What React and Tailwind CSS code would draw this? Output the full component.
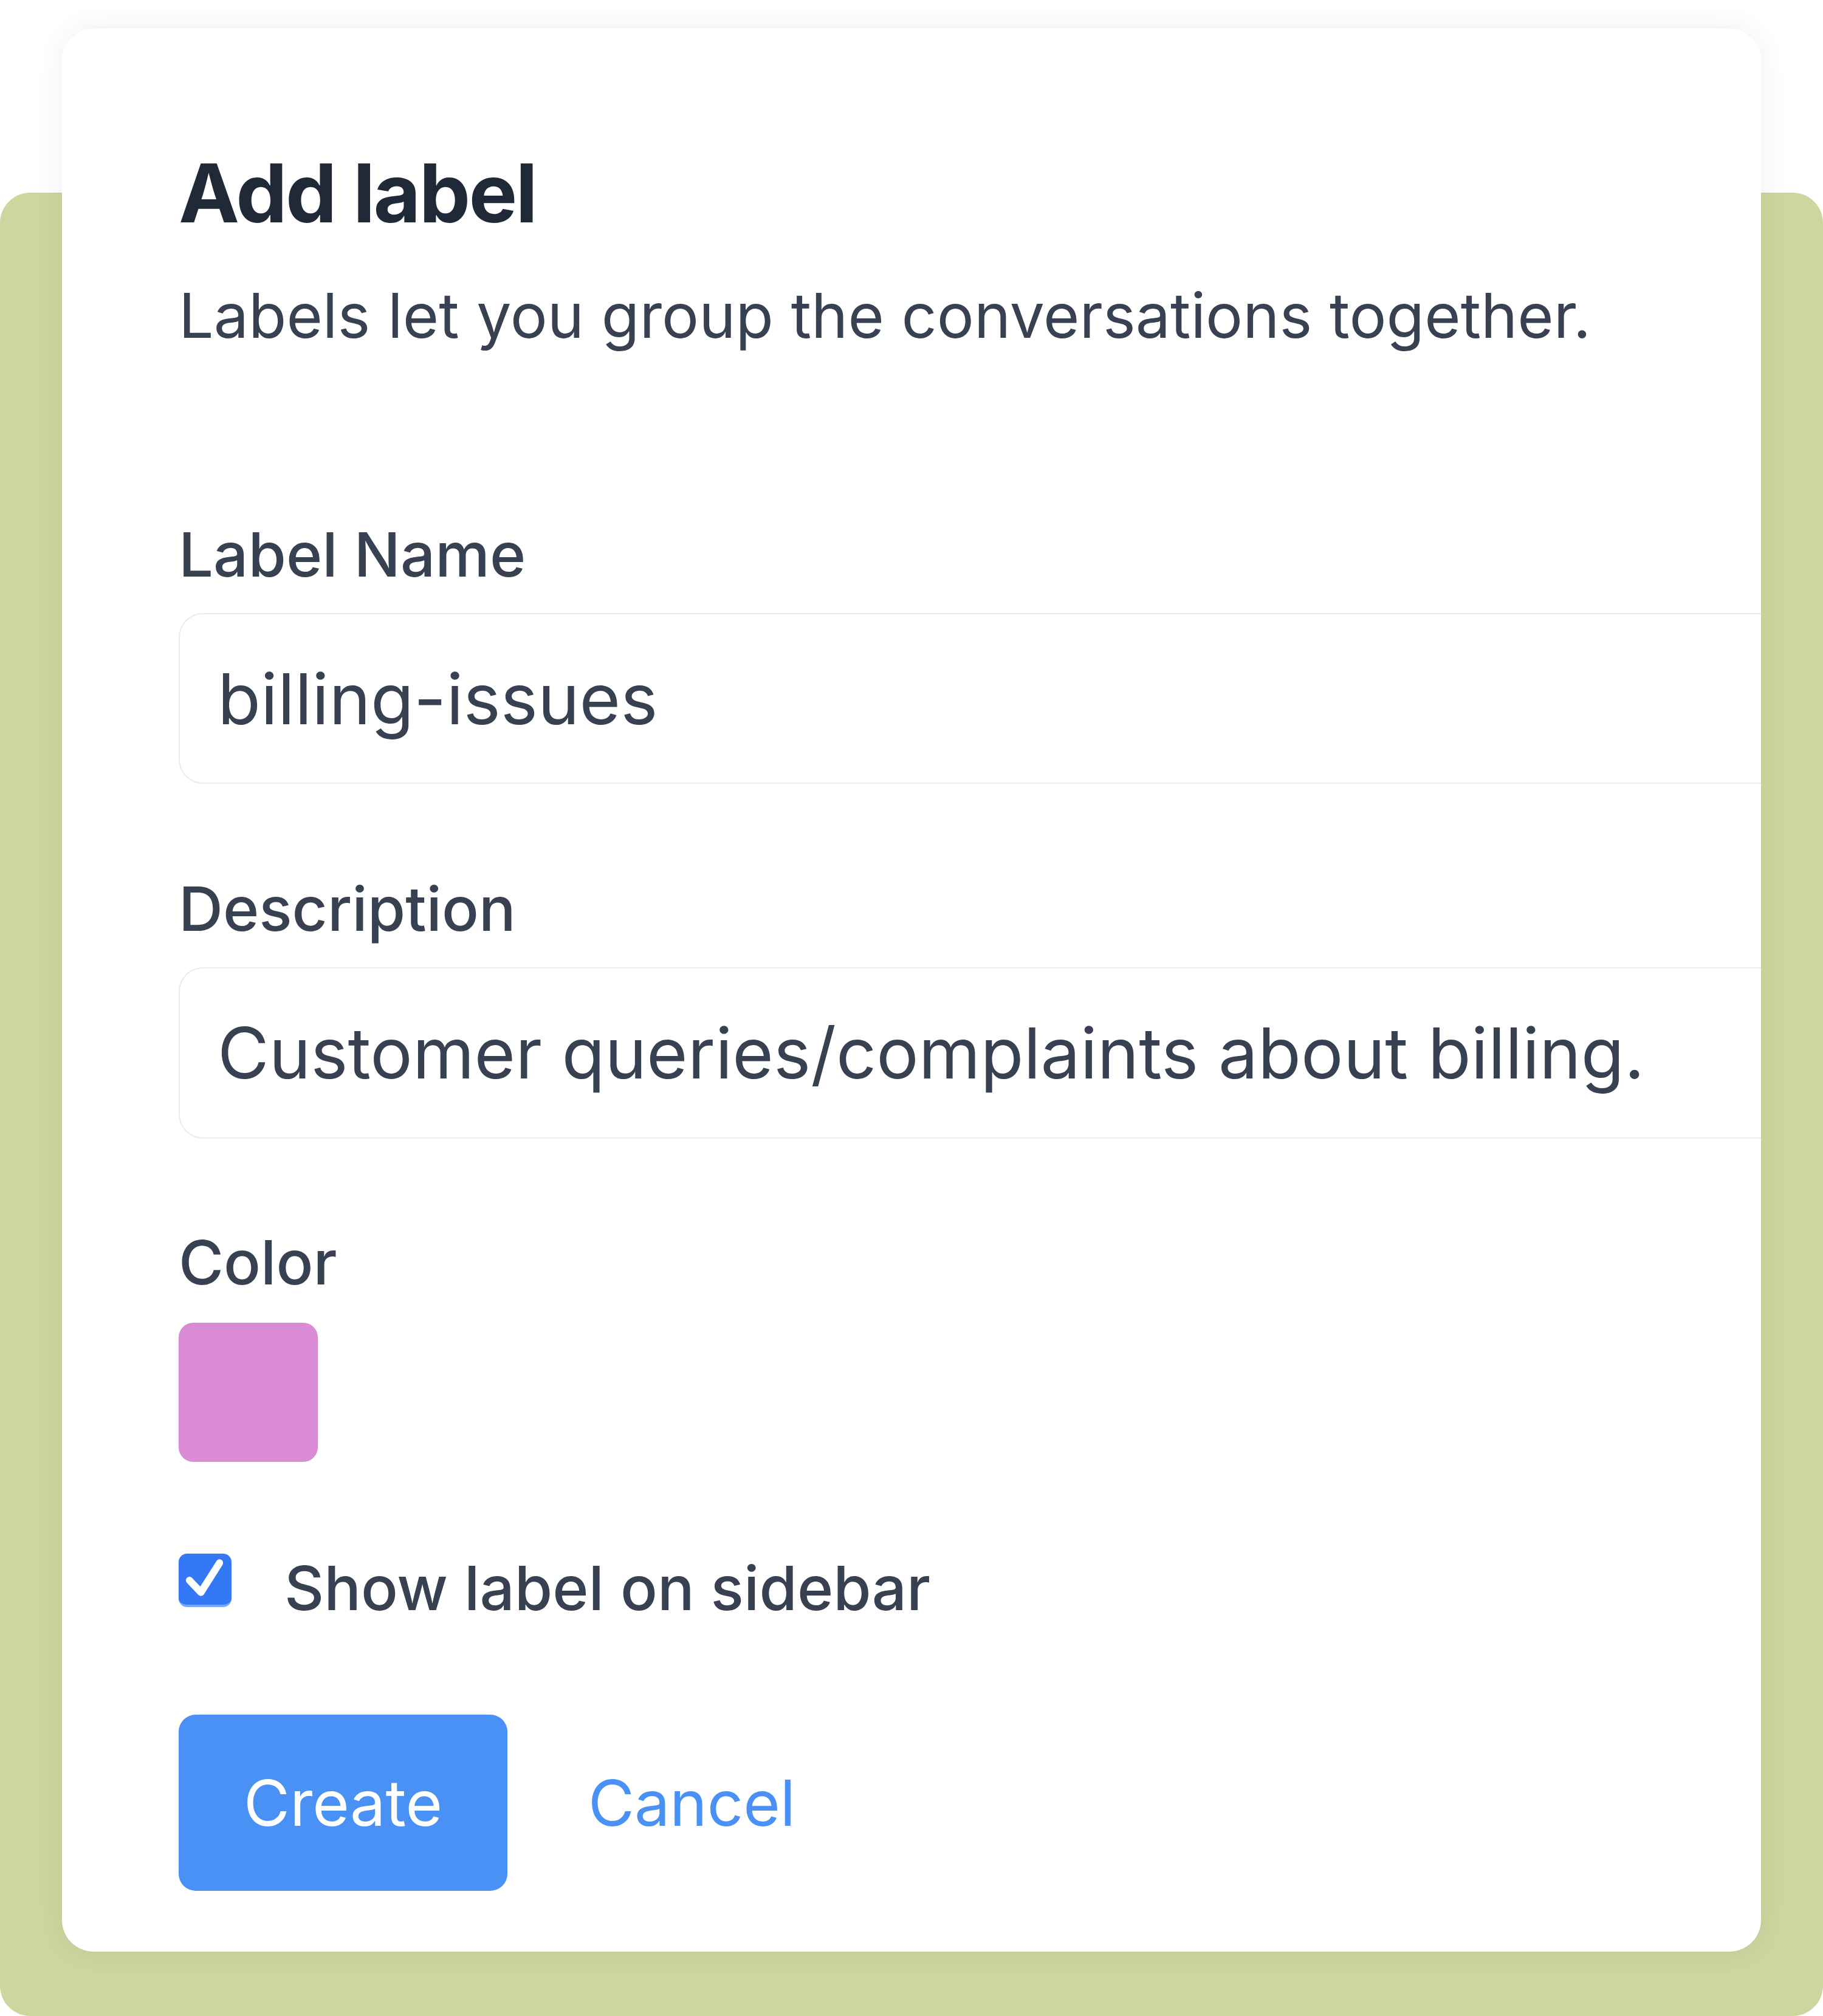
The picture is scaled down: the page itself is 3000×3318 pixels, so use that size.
import React, { useState } from 'react';

const FONT = { fontFamily: 'Inter, "Noto Sans", sans-serif' };

export default function App() {
  const [name, setName] = useState('billing-issues');
  const [desc, setDesc] = useState('Customer queries/complaints about billing.');
  const [showOnSidebar, setShowOnSidebar] = useState(true);

  return (
    <div className="relative w-[3000px] h-[3318px] bg-white overflow-hidden" style={FONT}>
      {/* green backdrop */}
      <div className="absolute left-0 right-0 top-[317px] bottom-0 rounded-[50px] bg-[#ced69f]" />

      {/* Modal card */}
      <div className="relative ml-[102px] mt-[47px] w-[2796px] h-[3165px] bg-white rounded-[52px] shadow-[0_0_48px_rgba(0,0,0,0.07)] overflow-hidden pl-[192px] pt-[203px] flex flex-col items-start">
        <h1 className="text-[134px] leading-none font-bold tracking-[-0.02em] text-[#1f2937]">Add label</h1>
        <p className="mt-[84px] text-[102px] leading-none text-[#374151]">
          Labels let you group the conversations together.
        </p>

        <label className="mt-[292px] text-[101px] leading-none font-medium text-[#374151]">Label Name</label>
        <div className="mt-[46px] w-[2700px] h-[281px] border-2 border-[#e8ebf0] rounded-[40px] flex items-center pl-[62px]">
          <input
            value={name}
            onChange={(e) => setName(e.target.value)}
            className="w-full bg-transparent outline-none text-[116px] leading-none text-[#374151]"
            style={FONT}
          />
        </div>

        <label className="mt-[155px] text-[101px] leading-none font-medium text-[#374151]">Description</label>
        <div className="mt-[46px] w-[2700px] h-[282px] border-2 border-[#e8ebf0] rounded-[40px] flex items-center pl-[62px]">
          <input
            value={desc}
            onChange={(e) => setDesc(e.target.value)}
            className="w-full bg-transparent outline-none text-[116px] leading-none text-[#374151]"
            style={FONT}
          />
        </div>

        <label className="mt-[153px] text-[101px] leading-none font-medium text-[#374151]">Color</label>
        <div className="mt-[49px] w-[229px] h-[229px] rounded-[24px] bg-[#da8bd5]" />

        {/* Sidebar checkbox */}
        <div className="mt-[151px] flex items-start">
          <button
            onClick={() => setShowOnSidebar(!showOnSidebar)}
            className={`w-[87px] h-[88px] rounded-[14px] flex items-center justify-center ${showOnSidebar ? 'bg-[#3478f6] border-b-4 border-[#7aa8f8]' : 'bg-white border-2 border-gray-300'}`}
          >
            {showOnSidebar && (
              <svg viewBox="0 0 88 88" className="w-[87px] h-[88px]">
                <polyline points="18,46 37,66 68,17" fill="none" stroke="white" strokeWidth="12" strokeLinecap="round" strokeLinejoin="round" />
              </svg>
            )}
          </button>
          <span className="ml-[87px] mt-[6px] text-[101px] leading-none font-medium text-[#374151]">Show label on sidebar</span>
        </div>

        {/* Actions */}
        <div className="mt-[158px] flex items-center">
          <button className="w-[541px] h-[290px] rounded-[28px] bg-[#4a91f5] text-white text-[104px] leading-none" style={FONT}>
            Create
          </button>
          <button className="ml-[133px] text-[#4a91f5] text-[104px] leading-none" style={FONT}>
            Cancel
          </button>
        </div>
      </div>
    </div>
  );
}
